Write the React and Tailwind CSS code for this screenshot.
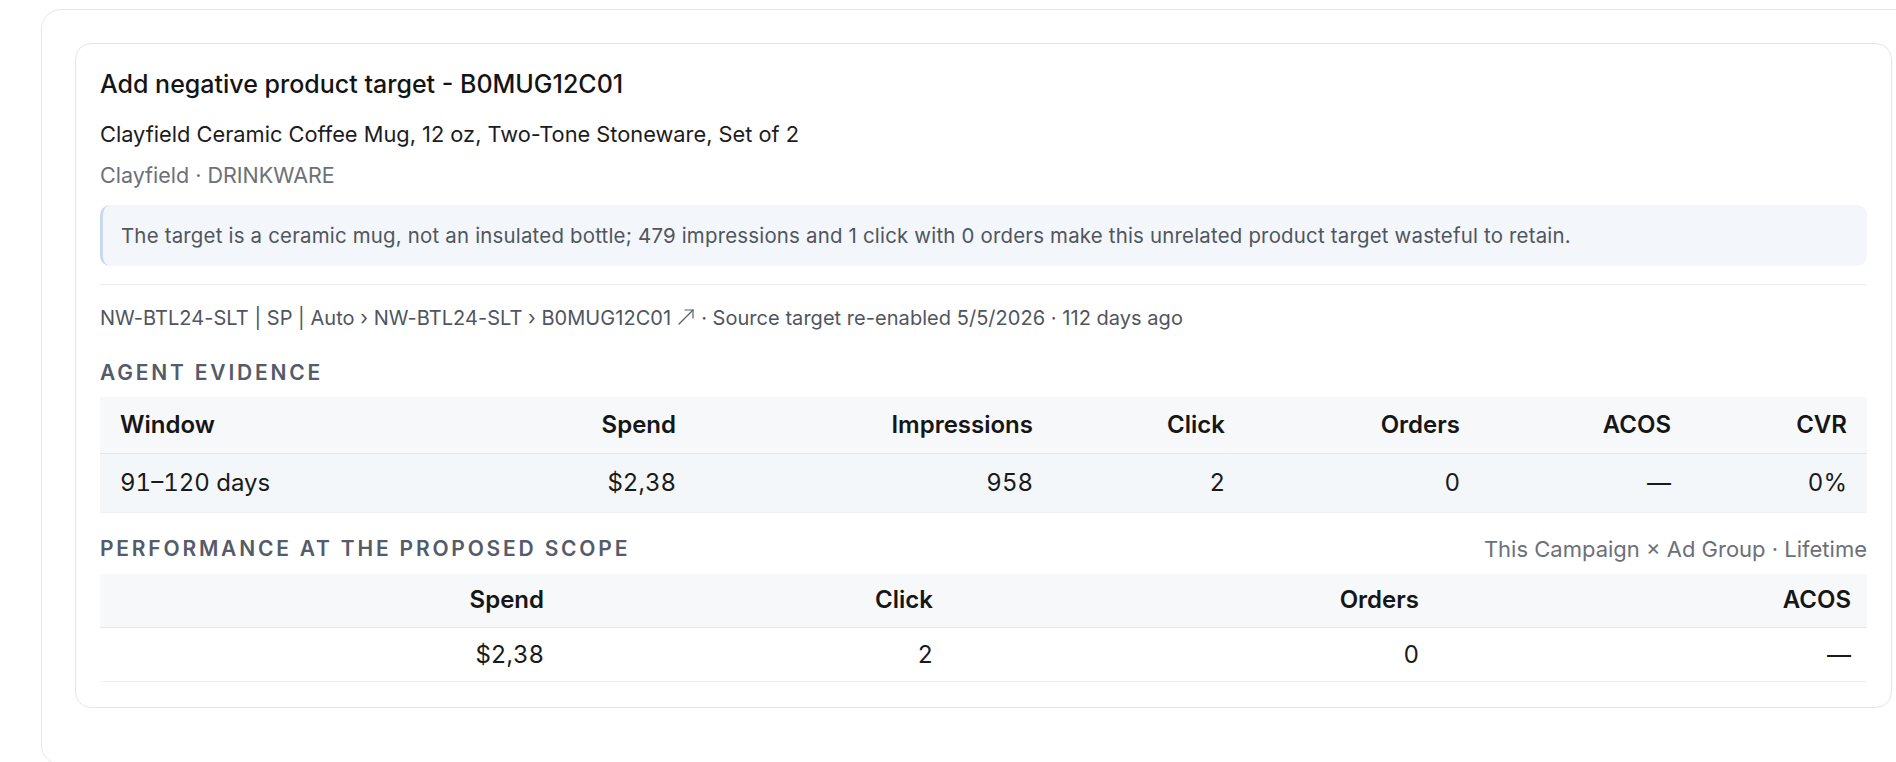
import React from 'react';

const evidenceColumns = [
  { label: 'Window', width: 'w-[360px]', align: 'text-left' },
  { label: 'Spend', width: 'w-[236px]', align: 'text-right' },
  { label: 'Impressions', width: 'w-[357px]', align: 'text-right' },
  { label: 'Click', width: 'w-[192px]', align: 'text-right' },
  { label: 'Orders', width: 'w-[235px]', align: 'text-right' },
  { label: 'ACOS', width: 'w-[211px]', align: 'text-right' },
  { label: 'CVR', width: 'w-[176px]', align: 'text-right' },
];

const evidenceRows = [['91–120 days', '$2,38', '958', '2', '0', '—', '0%']];

const scopeColumns = [
  { label: 'Spend', width: 'w-[460px]' },
  { label: 'Click', width: 'w-[389px]' },
  { label: 'Orders', width: 'w-[486px]' },
  { label: 'ACOS', width: 'w-[432px]' },
];

const scopeRow = ['$2,38', '2', '0', '—'];

const SectionTitle = ({ children }) => (
  <h3 className="text-[21px] leading-[28px] font-semibold tracking-[2.8px] text-[#545b69] uppercase">
    {children}
  </h3>
);

// thin diagonal "open in new" arrow used after the target ASIN
const ExternalArrow = () => (
  <svg width="18" height="18" viewBox="0 0 18 18" className="inline-block align-[-1px] mx-[6px]" fill="none" stroke="#5a5f68" strokeWidth="1.2" strokeLinecap="round" strokeLinejoin="round">
    <path d="M2 16 L16 2" />
    <path d="M8 2 H16 V10" />
  </svg>
);

const App = () => {
  return (
    <div className="w-full h-[762px] overflow-hidden bg-white font-['Inter',sans-serif]">
      <div className="mt-[9px] ml-[41px] w-[1890px] rounded-[20px] border border-[#e6e6ee] bg-white pt-[33px] pb-[56px] pl-[33px]">
        <div className="w-[1817px] rounded-[16px] border border-[#e3e5ea] bg-white px-6 pt-6 pb-[25px]">
          <h2 className="text-[25px] leading-[32px] font-medium text-[#141414]">
            Add negative product target - B0MUG12C01
          </h2>
          <p className="mt-[19px] text-[21.8px] leading-[30px] text-[#1c1c1e]">
            Clayfield Ceramic Coffee Mug, 12 oz, Two-Tone Stoneware, Set of 2
          </p>
          <p className="mt-[12px] text-[21.5px] leading-[28px] text-[#6b7079]">Clayfield · DRINKWARE</p>

          {/* rationale callout */}
          <div className="mt-4 rounded-[10px] border-l-[3px] border-[#c9d9ec] bg-[#f3f6fa] py-[15px] pl-[18px] text-[20.4px] tracking-[0.21px] leading-[31px] text-[#50555e]">
            The target is a ceramic mug, not an insulated bottle; 479 impressions and 1 click with 0 orders make this unrelated product target wasteful to retain.
          </div>

          <div className="mt-[18px] border-t border-[#eceef1]" />

          <p className="mt-[18px] text-[20px] tracking-[0.04px] leading-[30px] text-[#50555e]">
            NW-BTL24-SLT | SP | Auto › NW-BTL24-SLT › B0MUG12C01
            <ExternalArrow />
            · Source target re-enabled 5/5/2026 · 112 days ago
          </p>

          <div className="mt-[26px]">
            <SectionTitle>Agent evidence</SectionTitle>
          </div>
          <table className="mt-[10px] w-full table-fixed border-collapse">
            <thead>
              <tr className="h-[56px] bg-[#f7f8fa] border-b border-[#e4e6ea]">
                {evidenceColumns.map((col) => (
                  <th key={col.label} className={`${col.width} ${col.align} px-5 text-[24px] font-semibold text-[#161616]`}>
                    {col.label}
                  </th>
                ))}
              </tr>
            </thead>
            <tbody>
              {evidenceRows.map((row, i) => (
                <tr key={i} className="h-[59px] bg-[#f4f7fa] border-b border-[#eef0f3]">
                  {row.map((cell, j) => (
                    <td key={j} className={`${evidenceColumns[j].align} px-5 text-[24px] tabular-nums text-[#1a1a1a]`}>
                      {cell}
                    </td>
                  ))}
                </tr>
              ))}
            </tbody>
          </table>

          <div className="mt-[22px] flex items-center justify-between">
            <SectionTitle>Performance at the proposed scope</SectionTitle>
            <span className="text-[22px] leading-[28px] text-[#6b7079]">This Campaign × Ad Group · Lifetime</span>
          </div>
          <table className="mt-[11px] w-full table-fixed border-collapse">
            <thead>
              <tr className="h-[54px] bg-[#f7f8fa] border-b border-[#e4e6ea]">
                {scopeColumns.map((col) => (
                  <th key={col.label} className={`${col.width} text-right px-4 text-[24px] font-semibold text-[#161616]`}>
                    {col.label}
                  </th>
                ))}
              </tr>
            </thead>
            <tbody>
              <tr className="h-[54px] bg-white border-b border-[#eef0f3]">
                {scopeRow.map((cell, j) => (
                  <td key={j} className="text-right px-4 text-[24px] tabular-nums text-[#1a1a1a]">
                    {cell}
                  </td>
                ))}
              </tr>
            </tbody>
          </table>
        </div>
      </div>
    </div>
  );
};

export default App;
